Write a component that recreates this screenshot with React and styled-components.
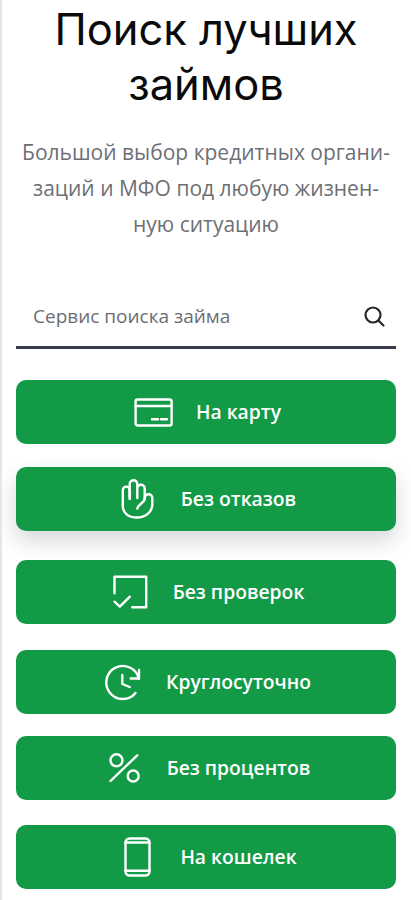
import styled, { createGlobalStyle } from "styled-components";

const GlobalStyle = createGlobalStyle`
  html, body {
    margin: 0;
    padding: 0;
    background: #fff;
  }
`;

const Page = styled.div`
  width: 411px;
  height: 900px;
  box-sizing: border-box;
  overflow: hidden;
  border-left: 2px solid #e6e6e6;
  padding: 2px 15px 0 14px;
  font-family: "Open Sans", "Noto Sans", sans-serif;
`;

const Title = styled.h1`
  margin: 0;
  font-family: Inter, Roboto, sans-serif;
  font-size: 43.4px;
  line-height: 55px;
  font-weight: 400;
  text-align: center;
  color: #0a0a0a;
`;

const Lead = styled.p`
  margin: 22px 0 0;
  font-size: 21px;
  line-height: 36px;
  text-align: center;
  color: #6d6f74;
`;

const SearchBar = styled.div`
  margin-top: 44px;
  height: 63px;
  box-sizing: border-box;
  display: flex;
  align-items: center;
  justify-content: space-between;
  padding: 0 10px 0 17px;
  border-bottom: 3px solid #3a3d52;
  font-size: 19px;
  color: #6b6d72;
`;

const SearchIcon = styled.svg`
  width: 24px;
  height: 24px;
  fill: none;
  stroke: #25262b;
  stroke-width: 2.2;
  stroke-linecap: round;
`;

const ButtonList = styled.div`
  display: flex;
  flex-direction: column;
  margin-top: 31px;
`;

const LoanButton = styled.a`
  height: 64px;
  box-sizing: border-box;
  padding-left: 2px;
  margin-top: ${(p) => p.$gap}px;
  border-radius: 10px;
  background: #129a47;
  color: #fff;
  display: flex;
  align-items: center;
  justify-content: center;
  gap: 23px;
  font-size: 19.3px;
  font-weight: 600;
  box-shadow: ${(p) => (p.$raised ? "0 10px 22px rgba(0, 0, 0, 0.16)" : "none")};
`;

const Label = styled.span`
  margin-top: -2px;
`;

const Icon = styled.svg`
  width: 40px;
  height: 40px;
  flex: none;
  fill: none;
  stroke: #fff;
  stroke-width: 2.4;
  stroke-linecap: round;
  stroke-linejoin: round;
`;

const CardIcon = () => (
  <Icon viewBox="0 0 40 40">
    <rect x="2.600" y="7.500" width="36" height="26" rx="2" />
    <path d="M2.600 14h36M19 27.300h6M28 27.300h6" />
  </Icon>
);

const HandIcon = () => (
  <Icon viewBox="0 0 40 40">
    <path d="M11.700 20V5a3.800 3.800 0 0 1 7.600 0v14M19.300 9.500a3.700 3.700 0 0 1 7.400 0V20" />
    <path d="M11.600 19v-8a3.400 3.400 0 0 0-6.800 0v16c0 7 5.500 11.500 14 11.500s15.500-5.500 15.500-13V19a3.700 3.700 0 0 0-7.500 0c0 2.500-1 3.500-3 5-2.500 2-4 3.500-4.500 5.500" />
  </Icon>
);

const CheckSquareIcon = () => (
  <Icon viewBox="0 0 40 40">
    <path d="M4.500 21.300V4.700h31.700v30.600h-14M4.500 29.700l5.300 5 10-10" />
  </Icon>
);

const ClockIcon = () => (
  <Icon viewBox="0 0 40 40">
    <path d="M35.800 16.500A16.500 16.500 0 1 0 32.500 31" />
    <path d="M19.300 13v9l7.400 3M36 8v8.500h-8.300" />
  </Icon>
);

const PercentIcon = () => (
  <Icon viewBox="0 0 40 40">
    <circle cx="12.500" cy="12.300" r="6" />
    <circle cx="29.200" cy="28" r="5.500" />
    <path d="M33.200 7.300 6.500 33" />
  </Icon>
);

const PhoneIcon = () => (
  <Icon viewBox="0 0 40 40">
    <rect x="8.500" y="1.500" width="24" height="37" rx="4" />
    <path d="M8.500 5.500h24M8.500 33.700h24" />
  </Icon>
);

const buttons = [
  { label: "На карту", IconComp: CardIcon, gap: 0 },
  { label: "Без отказов", IconComp: HandIcon, gap: 23, raised: true },
  { label: "Без проверок", IconComp: CheckSquareIcon, gap: 29 },
  { label: "Круглосуточно", IconComp: ClockIcon, gap: 26 },
  { label: "Без процентов", IconComp: PercentIcon, gap: 22 },
  { label: "На кошелек", IconComp: PhoneIcon, gap: 25 },
];

export default function App() {
  return (
    <>
      <GlobalStyle />
      <Page>
        <Title>
          Поиск лучших
          <br />
          займов
        </Title>
        <Lead>
          Большой выбор кредитных органи-
          <br />
          заций и МФО под любую жизнен-
          <br />
          ную ситуацию
        </Lead>
        <SearchBar>
          Сервис поиска займа
          <SearchIcon viewBox="0 0 24 24">
            <circle cx="11" cy="11" r="7.500" />
            <path d="m16.500 16.500 5 5" />
          </SearchIcon>
        </SearchBar>
        <ButtonList>
          {buttons.map(({ label, IconComp, gap, raised }) => (
            <LoanButton key={label} $gap={gap} $raised={raised}>
              <IconComp />
              <Label>{label}</Label>
            </LoanButton>
          ))}
        </ButtonList>
      </Page>
    </>
  );
}
